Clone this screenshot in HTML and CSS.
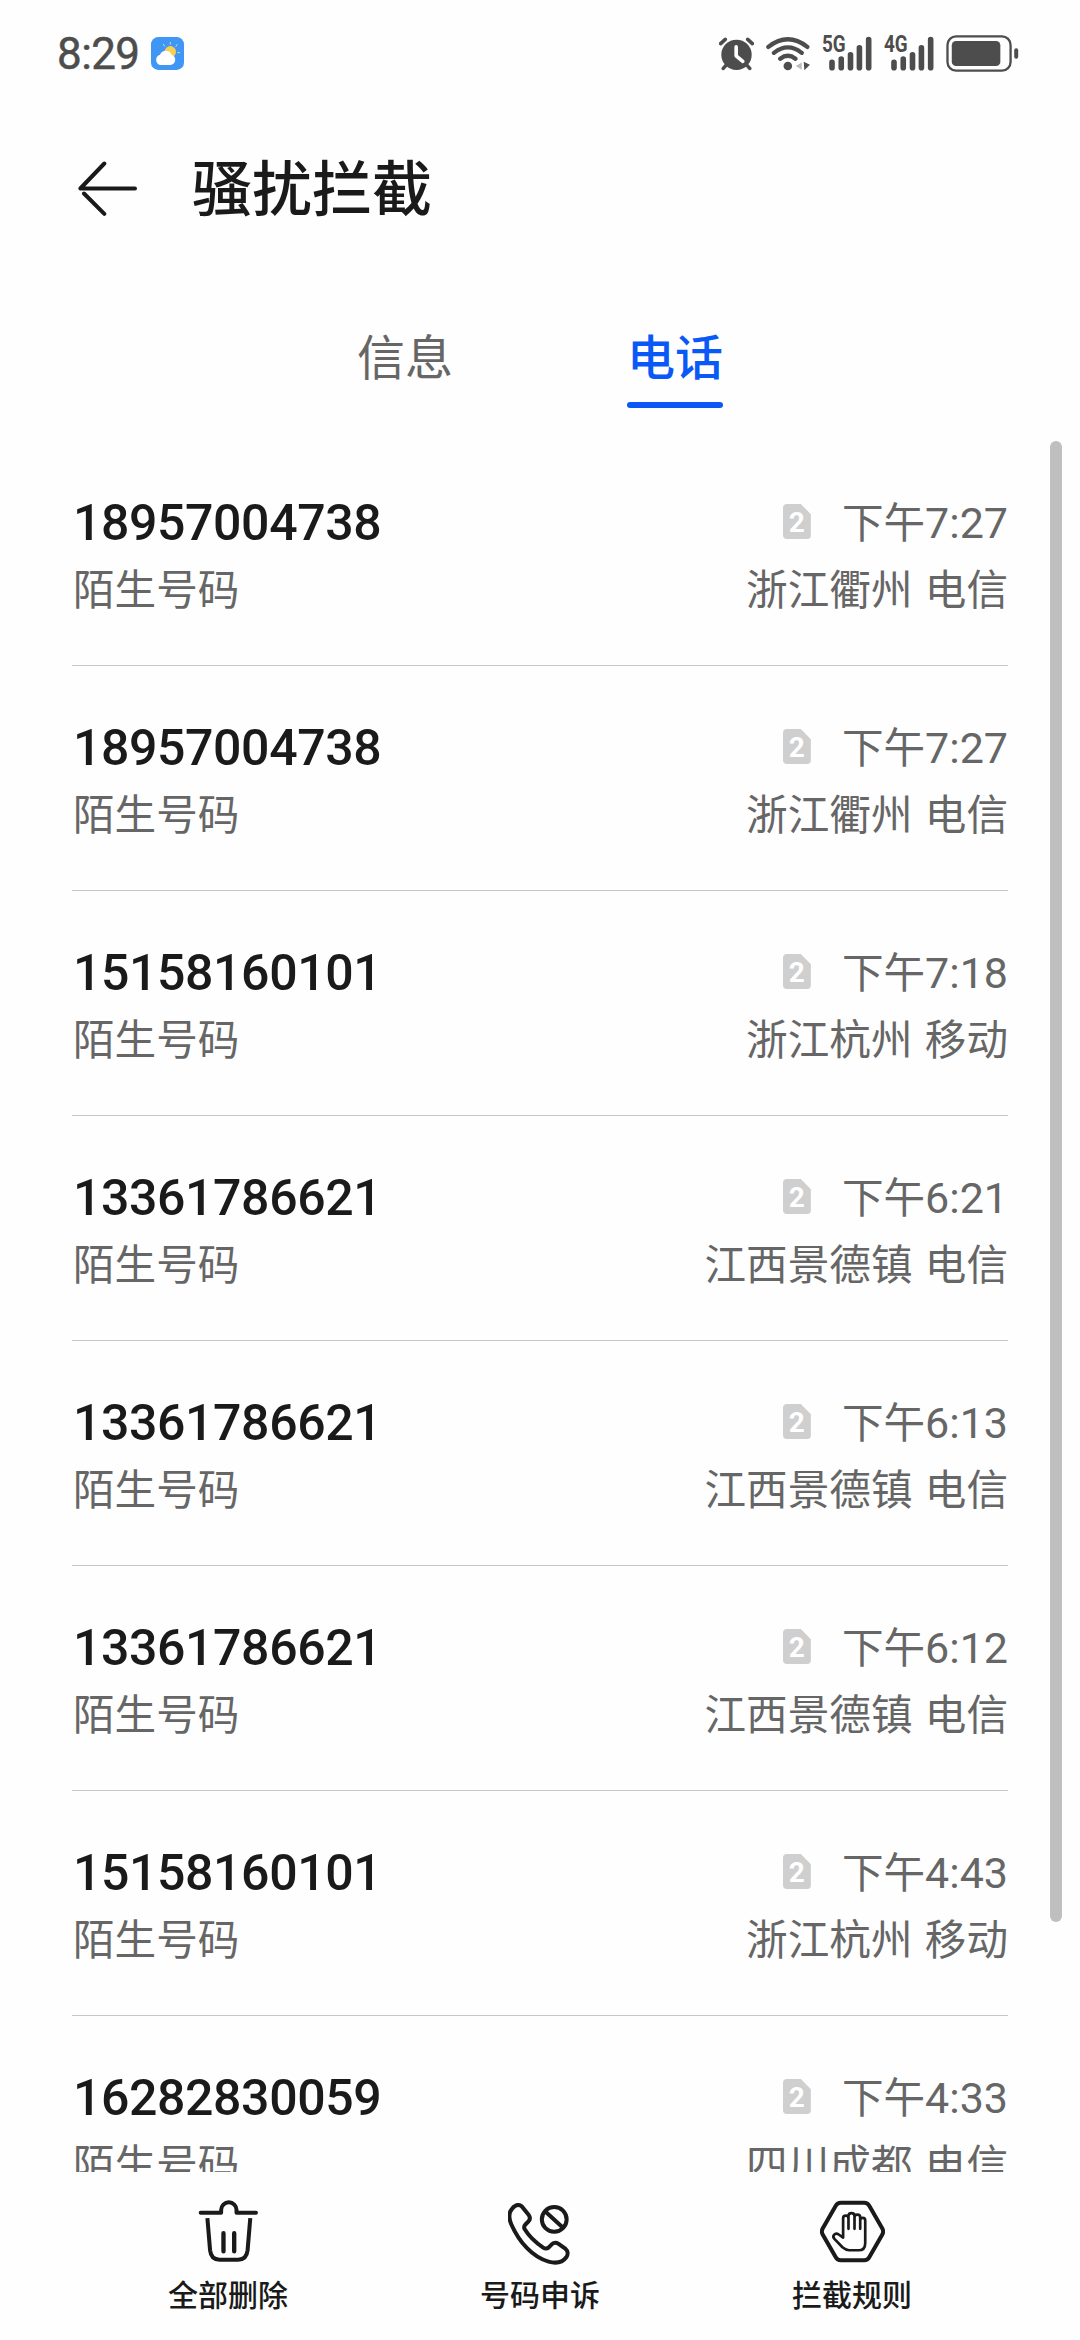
FILE: index.html
```html
<!DOCTYPE html>
<html lang="zh-CN">
<head>
  <meta charset="utf-8">
  <title>骚扰拦截</title>
  <link rel="stylesheet" href="styles.css">
</head>

<body>
  <svg class="defs" width="0" height="0">
    <!-- signal bars -->
    <symbol id="bars" viewBox="384 44 130 112">
      <path d="M393 127v16M421 117v26M449 104v39M476 83v60M504 58v85" stroke="#4d4d4d" stroke-width="17" stroke-linecap="round"/>
    </symbol>
  </svg>

  <div class="status-bar">
    <span class="clock">8:29</span>
    <svg class="weather" viewBox="333 51 99 99" width="33" height="33">
      <rect x="333" y="51" width="99" height="99" rx="22" fill="#3f96f5"/>
      <path d="M391 66v8M370 72l4 7M412 73l-5 7M420 98h-8" stroke="#dcd9a8" stroke-width="3"/>
      <circle cx="391" cy="95" r="17" fill="#f7cf52"/>
      <path d="M361 135a16 16 0 0 1-1-31a19 19 0 0 1 35 0a16 16 0 0 1-4 31z" fill="#fff"/>
    </svg>
    <div class="status-icons">
      <svg viewBox="52 44 106 112" width="35" height="37">
        <circle cx="105" cy="104" r="46" fill="#4d4d4d"/>
        <path d="M57 70l14-13M153 70l-14-13M73 136l-8 9M137 136l8 9" stroke="#4d4d4d" stroke-width="11" stroke-linecap="round"/>
        <path d="M104 80v27l20 17" fill="none" stroke="#fff" stroke-width="11" stroke-linecap="round" stroke-linejoin="round"/>
      </svg>
      <svg viewBox="195 44 133 112" width="44" height="37">
        <g fill="none" stroke="#4d4d4d" stroke-width="13" stroke-linecap="round">
          <path d="M202 80q59-46 118 0M219 98q42-33 84 0M238 116q23-18 46 0"/>
        </g>
        <circle cx="261" cy="138" r="13" fill="#4d4d4d"/>
        <path d="M303 127v22l-18-11z" fill="#bbb"/>
        <path d="M309 125l19 9-17 17z" fill="#4d4d4d"/>
      </svg>
      <div class="signal">
        <span>5G</span>
        <svg width="43" height="37"><use href="#bars"/></svg>
      </div>
      <div class="signal">
        <span>4G</span>
        <svg width="43" height="37"><use href="#bars"/></svg>
      </div>
      <svg viewBox="736 44 218 112" width="73" height="37">
        <rect x="739" y="48" width="191" height="104" rx="26" fill="none" stroke="#4d4d4d" stroke-width="7"/>
        <rect x="752" y="62" width="147" height="76" rx="13" fill="#4d4d4d"/>
        <rect x="941" y="84" width="12" height="32" rx="6" fill="#4d4d4d"/>
      </svg>
    </div>
  </div>

  <div class="header">
    <svg viewBox="85 95 177 164" width="59" height="55">
      <path d="M256 177H92L164 102M103 192l61 61" fill="none" stroke="#1a1a1a" stroke-width="12" stroke-linecap="round" stroke-linejoin="round"/>
    </svg>
    <h1>骚扰拦截</h1>
  </div>

  <div class="tabs">
    <div class="tab">信息</div>
    <div class="tab active">电话</div>
  </div>

  <div class="list">
    <div class="row">
      <div class="line"><span class="number">18957004738</span><span class="sim">2</span><span class="time">下午<b>7:27</b></span></div>
      <div class="line"><span>陌生号码</span><span class="place">浙江衢州 电信</span></div>
    </div>
    <div class="row">
      <div class="line"><span class="number">18957004738</span><span class="sim">2</span><span class="time">下午<b>7:27</b></span></div>
      <div class="line"><span>陌生号码</span><span class="place">浙江衢州 电信</span></div>
    </div>
    <div class="row">
      <div class="line"><span class="number">15158160101</span><span class="sim">2</span><span class="time">下午<b>7:18</b></span></div>
      <div class="line"><span>陌生号码</span><span class="place">浙江杭州 移动</span></div>
    </div>
    <div class="row">
      <div class="line"><span class="number">13361786621</span><span class="sim">2</span><span class="time">下午<b>6:21</b></span></div>
      <div class="line"><span>陌生号码</span><span class="place">江西景德镇 电信</span></div>
    </div>
    <div class="row">
      <div class="line"><span class="number">13361786621</span><span class="sim">2</span><span class="time">下午<b>6:13</b></span></div>
      <div class="line"><span>陌生号码</span><span class="place">江西景德镇 电信</span></div>
    </div>
    <div class="row">
      <div class="line"><span class="number">13361786621</span><span class="sim">2</span><span class="time">下午<b>6:12</b></span></div>
      <div class="line"><span>陌生号码</span><span class="place">江西景德镇 电信</span></div>
    </div>
    <div class="row">
      <div class="line"><span class="number">15158160101</span><span class="sim">2</span><span class="time">下午<b>4:43</b></span></div>
      <div class="line"><span>陌生号码</span><span class="place">浙江杭州 移动</span></div>
    </div>
    <div class="row">
      <div class="line"><span class="number">16282830059</span><span class="sim">2</span><span class="time">下午<b>4:33</b></span></div>
      <div class="line"><span>陌生号码</span><span class="place">四川成都 电信</span></div>
    </div>
    <div class="scrollbar"></div>
  </div>

  <div class="toolbar">
    <div class="tool">
      <svg viewBox="136 178 194 200">
        <path d="M150 219h61v-8a22 22 0 0 1 46 0v8h58" stroke-width="12"/>
        <path d="M170 235l8 96q3 28 28 28h56q25 0 28-28l8-96" stroke-width="12" stroke-linecap="butt"/>
        <path d="M218 280v54M250 280v54" stroke-width="13"/>
      </svg>
      <span>全部删除</span>
    </div>
    <div class="tool">
      <svg viewBox="143 178 194 200">
        <path d="M156 206c-12 13-10 32-3 48c24 54 64 98 111 111c22 6 42 2 53-13c6-9 5-19-2-25l-21-15c-8-5-16-4-22 3l-8 8c-5 4-10 4-16 0c-23-15-42-33-56-56c-2-6-1-9 3-13l8-8c6-6 7-13 2-20l-17-21c-8-13-22-11-32 1z" stroke-width="12"/>
        <circle cx="281" cy="239" r="37" stroke-width="12"/>
        <path d="M256 217l48 44" stroke-width="12"/>
      </svg>
      <span>号码申诉</span>
    </div>
    <div class="tool">
      <svg viewBox="149 178 194 200">
        <path d="M211 189h70q10 0 15 9l39 68q5 9 0 18l-39 68q-5 9-15 9h-70q-10 0-15-9l-39-68q-5-9 0-18l39-68q5-9 15-9z" stroke-width="12"/>
        <path d="M218 293v-57c0-11 16-11 16 0v31v-38c0-12 18-12 18 0v38v-34c0-11 17-11 17 0v34v-25c0-10 15-10 15 0v67c0 15-8 22-20 22h-28c-9 0-14-4-20-9l-24-25c-8-9 2-21 13-13z" stroke-width="8"/>
      </svg>
      <span>拦截规则</span>
    </div>
  </div>
</body>
</html>
```
FILE: styles.css
```css
* {
  box-sizing: border-box;
}
body {
  margin: 0;
  width: 1080px;
  height: 2340px;
  overflow: hidden;
  display: flex;
  flex-direction: column;
  background: #fefefe;
  color: #1a1a1a;
  font-family: Roboto, "Noto Sans CJK SC", sans-serif;
}
svg {
  display: block;
  flex: none;
}
.defs {
  position: absolute;
}

.status-bar {
  height: 107px;
  padding: 0 61px 0 57px;
  display: flex;
  align-items: center;
  color: #4d4d4d;
}
.clock {
  width: 94px;
  font-size: 44px;
  letter-spacing: -0.6px;
  -webkit-text-stroke: 0.5px #4d4d4d;
}
.status-icons {
  margin-left: auto;
  display: flex;
  gap: 12px;
}
.signal {
  position: relative;
  width: 50px;
  padding-left: 7px;
}
.signal span {
  position: absolute;
  left: 0;
  top: 0;
  font-size: 23px;
  line-height: 20px;
  font-weight: 700;
  transform: scaleX(0.82);
  transform-origin: left;
}

.header {
  height: 163px;
  padding-left: 78px;
  display: flex;
  align-items: center;
  gap: 55px;
}
h1 {
  margin: 0;
  padding-top: 5px;
  font-size: 60px;
  font-weight: 500;
  line-height: 80px;
}

.tabs {
  height: 171px;
  padding-top: 53px;
  display: flex;
  justify-content: center;
  gap: 174px;
}
.tab {
  width: 96px;
  height: 85px;
  font-size: 48px;
  line-height: 72px;
  text-align: center;
  color: #666;
}
.active {
  display: flex;
  flex-direction: column;
  justify-content: space-between;
  color: #0a59f7;
  font-weight: 500;
}
.active::after {
  content: "";
  height: 6px;
  border-radius: 3px;
  background: #0a59f7;
}

.list {
  position: relative;
  height: 1731px;
  padding: 0 72px;
  overflow: hidden;
}
.row {
  height: 225px;
  padding-top: 48px;
  border-bottom: 1px solid #c6c6c6;
}
.line {
  height: 68px;
  padding-left: 1px;
  display: flex;
  align-items: center;
  font-size: 41.6px;
  line-height: 60px;
  color: #666;
}
.number {
  font-size: 50px;
  font-weight: 500;
  letter-spacing: -0.4px;
  color: #1a1a1a;
}
/* sim card with a cut corner */
.sim {
  width: 28px;
  height: 35px;
  margin: 0 31px 3px auto;
  border-radius: 4px;
  background: #cfcfcf;
  clip-path: polygon(0 0, 64% 0, 100% 29%, 100% 100%, 0 100%);
  color: #fff;
  font-size: 28px;
  font-weight: 700;
  line-height: 38px;
  text-align: center;
}
.time b {
  font-size: 43px;
  font-weight: 400;
}
.place {
  margin-left: auto;
  word-spacing: 2px;
}
.scrollbar {
  position: absolute;
  top: 0;
  right: 18px;
  width: 12px;
  height: 1481px;
  border-radius: 6px;
  background: #bfbfbf;
}

.toolbar {
  height: 168px;
  padding: 0 72px;
  display: flex;
}
.tool {
  flex: 1;
  padding-top: 27px;
  display: flex;
  flex-direction: column;
  align-items: center;
  font-size: 30px;
  line-height: 44px;
  font-weight: 500;
}
.tool svg {
  width: 65px;
  height: 67px;
  margin-bottom: 8px;
  fill: none;
  stroke: #1a1a1a;
  stroke-linecap: round;
  stroke-linejoin: round;
}
```
